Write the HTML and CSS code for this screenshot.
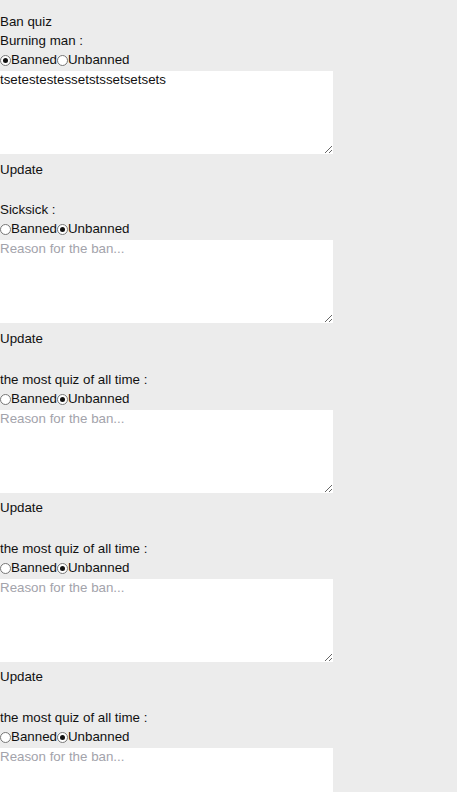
FILE: index.html
```html
<!DOCTYPE html>
<html>
<head>
<meta charset="utf-8">
<link rel="stylesheet" href="styles.css">
</head>
<body>
<div class="page">
  <div class="heading">Ban quiz</div>

  <form class="item">
    <div class="title">Burning man :</div>
    <div class="radios"><input type="radio" name="s1" checked>Banned<input type="radio" name="s1">Unbanned</div>
    <textarea class="reason" placeholder="Reason for the ban...">tsetestestessetstssetsetsets</textarea>
    <button type="button" class="update">Update</button>
  </form>

  <form class="item">
    <div class="title">Sicksick :</div>
    <div class="radios"><input type="radio" name="s2">Banned<input type="radio" name="s2" checked>Unbanned</div>
    <textarea class="reason" placeholder="Reason for the ban..."></textarea>
    <button type="button" class="update">Update</button>
  </form>

  <form class="item">
    <div class="title">the most quiz of all time :</div>
    <div class="radios"><input type="radio" name="s3">Banned<input type="radio" name="s3" checked>Unbanned</div>
    <textarea class="reason" placeholder="Reason for the ban..."></textarea>
    <button type="button" class="update">Update</button>
  </form>

  <form class="item">
    <div class="title">the most quiz of all time :</div>
    <div class="radios"><input type="radio" name="s4">Banned<input type="radio" name="s4" checked>Unbanned</div>
    <textarea class="reason" placeholder="Reason for the ban..."></textarea>
    <button type="button" class="update">Update</button>
  </form>

  <form class="item">
    <div class="title">the most quiz of all time :</div>
    <div class="radios"><input type="radio" name="s5">Banned<input type="radio" name="s5" checked>Unbanned</div>
    <textarea class="reason" placeholder="Reason for the ban..."></textarea>
    <button type="button" class="update">Update</button>
  </form>
</div>
</body>
</html>
```

FILE: styles.css
```css
html, body {
  margin: 0;
  padding: 0;
  background: #ececec;
}

.page {
  padding-top: 12px;
  font-family: "Liberation Sans", Arial, sans-serif;
  font-size: 13.33px;
  line-height: 19px;
  color: #111;
}

.heading {
  height: 19px;
}

.item {
  display: block;
  margin: 0 0 21.75px 0;
}

.title {
  height: 19px;
}

.radios {
  height: 21px;
  display: flex;
  align-items: flex-start;
}

.radios input {
  -webkit-appearance: none;
  appearance: none;
  width: 11px;
  height: 11px;
  margin: 5px 0 0 0;
  border: 1px solid #777;
  border-radius: 50%;
  background: #fff;
  box-sizing: border-box;
  position: relative;
  flex: none;
}

.radios input:checked::after {
  content: "";
  position: absolute;
  left: 2px;
  top: 2px;
  width: 5px;
  height: 5px;
  border-radius: 50%;
  background: #111;
}

.reason {
  display: block;
  box-sizing: border-box;
  width: 333px;
  height: 83px;
  margin: 0 0 5.5px 0;
  padding: 1px 0;
  border: none;
  outline: none;
  background: #fff;
  font-family: "Liberation Sans", Arial, sans-serif;
  font-size: 13.33px;
  line-height: 15px;
  color: #111;
}

.reason::placeholder {
  color: #a3a3ab;
}

.update {
  display: block;
  height: 19px;
  margin: 0;
  padding: 0;
  border: none;
  background: none;
  font: inherit;
  line-height: 19px;
  color: inherit;
}
```
